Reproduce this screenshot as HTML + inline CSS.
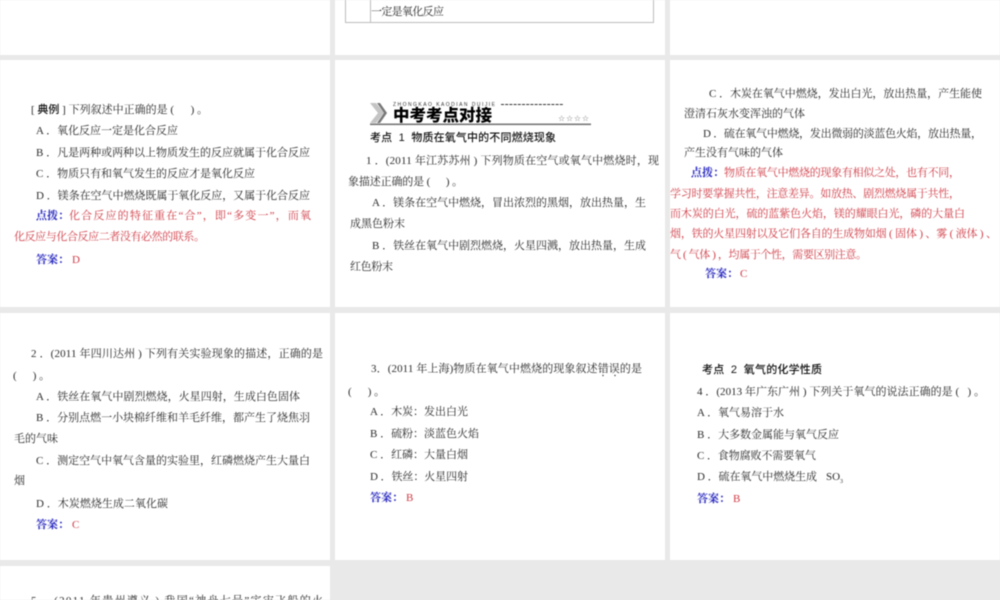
<!DOCTYPE html>
<html lang="zh"><head><meta charset="utf-8"><title>中考考点对接</title>
<style>
html,body{margin:0;padding:0;width:1000px;height:600px;overflow:hidden;background:#e9e9e9}
svg{display:block;position:absolute;left:0;top:0;filter:blur(.4px)}
text{font-family:"Liberation Serif","Noto Serif CJK SC",serif;font-size:11px;fill:#2a2a2a;white-space:pre}
.r{fill:#cf3a44}
.b{fill:#2a2ac0;font-weight:700}
.k{font-family:"Liberation Sans","Noto Sans CJK SC",sans-serif;font-weight:500;fill:#111}
</style></head><body>
<svg width="1000" height="600" viewBox="0 0 1000 600" xmlns="http://www.w3.org/2000/svg" xml:space="preserve">
<g fill="#fff">
<rect x="0" y="0" width="330" height="55"/><rect x="335" y="0" width="330" height="55"/><rect x="670" y="0" width="330" height="55"/>
<rect x="0" y="60" width="330" height="247"/><rect x="335" y="60" width="330" height="247"/><rect x="670" y="60" width="330" height="247"/>
<rect x="0" y="313" width="330" height="247"/><rect x="335" y="313" width="330" height="247"/><rect x="670" y="313" width="330" height="247"/>
<rect x="0" y="566" width="330" height="34"/>
</g>
<path d="M345.5 0V22.5H653.5V0M370.5 0V22.5" fill="none" stroke="#bdbdbd"/>
<text x="371" y="15" textLength="73">一定是氧化反应</text>

<!-- panel 1 -->
<text x="31" y="113" textLength="177">[ <tspan class="k">典例</tspan> ] 下列叙述中正确的是 (      ) 。</text>
<text x="36" y="134" textLength="142">A ．氧化反应一定是化合反应</text>
<text x="36" y="156" textLength="274">B ．凡是两种或两种以上物质发生的反应就属于化合反应</text>
<text x="36" y="177" textLength="219">C ．物质只有和氧气发生的反应才是氧化反应</text>
<text x="36" y="199" textLength="274">D ．镁条在空气中燃烧既属于氧化反应，又属于化合反应</text>
<text class="b" x="36" y="219">点拨：</text>
<text class="r" x="69" y="219" textLength="242">化合反应的特征重在“合”，即“多变一”，而氧</text>
<text class="r" x="14" y="240" textLength="191">化反应与化合反应二者没有必然的联系。</text>
<text class="b" x="36" y="263">答案：</text>
<text class="r" x="72" y="263">D</text>

<!-- panel 2 -->
<path d="M370 103h6l8 10-8 10h-6l8-10z" fill="#c4c4c4"/>
<path d="M377 103h3l7 10-7 10h-3l7-10z" fill="#777"/>
<text x="393" y="106" textLength="102" style="font:5px 'Liberation Sans',sans-serif;fill:#333">ZHONGKAO KAODIAN DUIJIE</text>
<path d="M501 104.5H564" stroke="#333" stroke-width="1" stroke-dasharray="3 1.2"/>
<text x="393" y="121" textLength="99" style="font:800 16.5px 'Noto Sans CJK SC',sans-serif;fill:#000">中考考点对接</text>
<text x="558" y="121" textLength="31" style="font:8px 'DejaVu Sans',sans-serif;fill:#777">☆☆☆☆</text>
<rect x="370" y="123.5" width="221" height="1.6" fill="#777"/>
<text class="k" x="370" y="141" textLength="186">考点  1  物质在氧气中的不同燃烧现象</text>
<text x="366" y="164" textLength="293">1 ．(2011 年江苏苏州 ) 下列物质在空气或氧气中燃烧时，现</text>
<text x="348" y="185" textLength="115">象描述正确的是 (      ) 。</text>
<text x="372" y="206" textLength="274">A ．镁条在空气中燃烧，冒出浓烈的黑烟，放出热量，生</text>
<text x="350" y="227" textLength="55">成黑色粉末</text>
<text x="372" y="249" textLength="274">B ．铁丝在氧气中剧烈燃烧，火星四溅，放出热量，生成</text>
<text x="350" y="270" textLength="43">红色粉末</text>

<!-- panel 3 -->
<text x="709" y="97" textLength="273">C ．木炭在氧气中燃烧，发出白光，放出热量，产生能使</text>
<text x="684" y="117" textLength="121">澄清石灰水变浑浊的气体</text>
<text x="703" y="137" textLength="279">D ．硫在氧气中燃烧，发出微弱的淡蓝色火焰，放出热量，</text>
<text x="684" y="156" textLength="99">产生没有气味的气体</text>
<text class="b" x="691" y="176">点拨：</text>
<text class="r" x="724" y="176" textLength="236">物质在氧气中燃烧的现象有相似之处，也有不同，</text>
<text class="r" x="670" y="197" textLength="290">学习时要掌握共性，注意差异。如放热、剧烈燃烧属于共性，</text>
<text class="r" x="670" y="217" textLength="295">而木炭的白光，硫的蓝紫色火焰，镁的耀眼白光，磷的大量白</text>
<text class="r" x="670" y="237" textLength="327">烟，铁的火星四射以及它们各自的生成物如烟 ( 固体 ) 、雾 ( 液体 ) 、</text>
<text class="r" x="670" y="258" textLength="197">气 ( 气体 ) ，均属于个性，需要区别注意。</text>
<text class="b" x="705" y="277">答案：</text>
<text class="r" x="740" y="277">C</text>

<!-- panel 4 -->
<text x="31" y="357" textLength="292">2 ．(2011 年四川达州 ) 下列有关实验现象的描述，正确的是</text>
<text x="13" y="379" textLength="37">(      ) 。</text>
<text x="36" y="400" textLength="264">A ．铁丝在氧气中剧烈燃烧，火星四射，生成白色固体</text>
<text x="36" y="421" textLength="274">B ．分别点燃一小块棉纤维和羊毛纤维，都产生了烧焦羽</text>
<text x="14" y="442" textLength="44">毛的气味</text>
<text x="36" y="464" textLength="274">C ．测定空气中氧气含量的实验里，红磷燃烧产生大量白</text>
<text x="14" y="484">烟</text>
<text x="36" y="507" textLength="132">D ．木炭燃烧生成二氧化碳</text>
<text class="b" x="36" y="528">答案：</text>
<text class="r" x="72" y="528">C</text>

<!-- panel 5 -->
<text x="371" y="372" textLength="271">3．(2011 年上海)物质在氧气中燃烧的现象叙述错误的是</text>
<circle cx="603" cy="375.5" r=".7" fill="#333"/><circle cx="615" cy="375.5" r=".7" fill="#333"/>
<text x="348" y="395" textLength="37">(      ) 。</text>
<text x="370" y="415" textLength="98">A ．木炭：发出白光</text>
<text x="370" y="437" textLength="109">B ．硫粉：淡蓝色火焰</text>
<text x="370" y="458" textLength="98">C ．红磷：大量白烟</text>
<text x="370" y="480" textLength="98">D ．铁丝：火星四射</text>
<text class="b" x="370" y="501">答案：</text>
<text class="r" x="406" y="501">B</text>

<!-- panel 6 -->
<text class="k" x="702" y="373" textLength="120">考点  2  氧气的化学性质</text>
<text x="697" y="395" textLength="288">4 ．(2013 年广东广州 ) 下列关于氧气的说法正确的是 (   ) 。</text>
<text x="697" y="416" textLength="87">A ．氧气易溶于水</text>
<text x="697" y="438" textLength="142">B ．大多数金属能与氧气反应</text>
<text x="697" y="459" textLength="119">C ．食物腐败不需要氧气</text>
<text x="697" y="480" textLength="120">D ．硫在氧气中燃烧生成</text>
<text x="826" y="480">SO</text><text x="840" y="483" style="font-size:6px">3</text>
<text class="b" x="697" y="502">答案：</text>
<text class="r" x="733" y="502">B</text>

<!-- panel 7 -->
<text x="31" y="604" textLength="292">5 ．(2011 年贵州遵义 ) 我国“神舟七号”宇宙飞船的火</text>
</svg>
</body></html>
